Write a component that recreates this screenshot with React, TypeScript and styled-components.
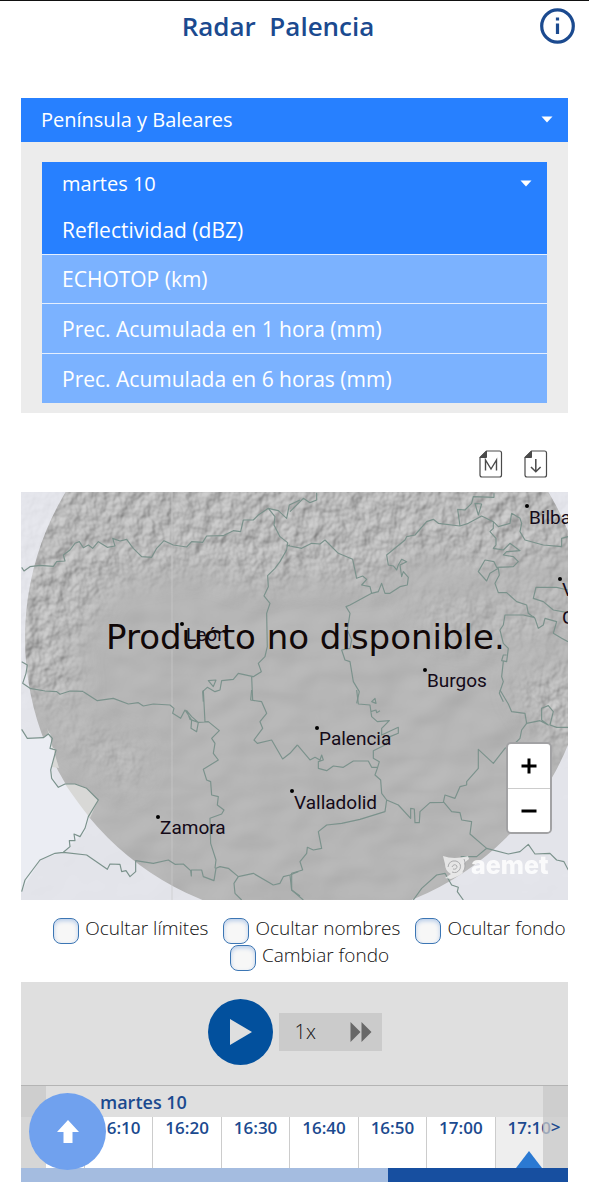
import React, { useState } from 'react';
import styled, { createGlobalStyle } from 'styled-components';

const sans = '"Open Sans", "Noto Sans", sans-serif';
const navy = '#1b4a8f';

const GlobalStyle = createGlobalStyle`
  * { box-sizing: border-box; }
  body { margin: 0; background: #fff; font-family: ${sans}; color: #111; }
  button, select, input { font-family: inherit; margin: 0; }
`;

const Page = styled.div`
  border-top: 1px solid #111;
`;

const Header = styled.header`
  display: grid;
  grid-template-columns: 1fr auto 1fr;
  align-items: center;
  height: 49px;
  padding: 0 14px 0 21px;
`;

const Title = styled.h1`
  grid-column: 2;
  margin: 0;
  padding-right: 40px;
  font-family: ${sans};
  font-size: 26px;
  line-height: 32px;
  font-weight: 600;
  color: ${navy};
  white-space: pre;
`;

const InfoButton = styled.button`
  justify-self: end;
  width: 35px;
  height: 36px;
  padding: 0;
  border: 0;
  background: none;
`;

const Main = styled.main`
  padding: 48px 21px 18px;
`;

const SelectWrap = styled.div`
  position: relative;
  height: 44px;
  background: #2780ff;
`;

const Select = styled.select`
  appearance: none;
  width: 100%;
  height: 44px;
  padding: 0 20px;
  border: 0;
  border-radius: 0;
  background: transparent;
  color: #fff;
  font-size: 20px;
  line-height: 28px;
`;

const Caret = styled.svg`
  position: absolute;
  right: 15px;
  top: 18px;
  width: 12px;
  height: 7px;
  pointer-events: none;
`;

const Panel = styled.section`
  padding: 20px 21px 10px;
  background: #ececec;
`;

const ProductList = styled.div`
  display: grid;
  gap: 1px;
  background: #e4efff;
`;

const Product = styled.button<{ $active?: boolean }>`
  height: 48px;
  padding: 0 20px;
  border: 0;
  text-align: left;
  font-size: 21px;
  line-height: 28px;
  color: #fff;
  background: ${p => (p.$active ? '#2780ff' : '#7bb2ff')};
  &:nth-child(n + 3) { height: 49px; }
`;

const Tools = styled.div`
  display: flex;
  justify-content: flex-end;
  gap: 21px;
  padding: 37px 20px 14px;
`;

const ToolButton = styled.button`
  width: 24px;
  height: 28px;
  padding: 0;
  border: 0;
  background: none;
`;

const MapFrame = styled.div`
  position: relative;
`;

const MapSvg = styled.svg`
  display: block;
  width: 100%;
  height: auto;
`;

const Zoom = styled.div`
  position: absolute;
  right: 16px;
  bottom: 66px;
  width: 46px;
  border: 2px solid #a2a2a4;
  border-radius: 5px;
  overflow: hidden;
`;

const ZoomButton = styled.button`
  display: grid;
  place-items: center;
  width: 100%;
  height: 44px;
  padding: 0;
  border: 0;
  background: #fff;
  & + & { border-top: 1px solid #ccc; }
`;

const Options = styled.div`
  display: flex;
  flex-wrap: wrap;
  justify-content: center;
  column-gap: 15px;
  padding: 16px 0 12px 30px;
`;

const Option = styled.label`
  display: flex;
  gap: 6px;
  height: 27px;
  font-size: 19px;
  line-height: 24px;
  font-weight: 300;
  white-space: nowrap;
`;

const Check = styled.input`
  appearance: none;
  flex: none;
  width: 26px;
  height: 26px;
  margin-top: 2px;
  border: 1px solid #3c76b4;
  border-radius: 8px;
  background: #f7f7f7;
  box-shadow: inset 0 2px 4px #b7cce9;
  &:checked { background: #2780ff; }
`;

const Player = styled.section`
  position: relative;
  background: #dfdfdf;
`;

const Controls = styled.div`
  display: flex;
  align-items: center;
  justify-content: center;
  gap: 6px;
  height: 104px;
  padding-bottom: 4px;
  border-bottom: 1px solid #b4b4b4;
`;

const PlayButton = styled.button`
  display: grid;
  place-items: center;
  width: 65px;
  height: 66px;
  padding: 0 0 0 2px;
  border: 0;
  border-radius: 50%;
  background: #02509d;
`;

const SpeedButton = styled.button`
  display: flex;
  align-items: center;
  justify-content: space-between;
  width: 103px;
  height: 38px;
  padding: 0 10px 0 16px;
  border: 0;
  background: #cbcbcb;
  font-size: 20px;
  font-weight: 300;
  color: #111;
`;

const Timeline = styled.div`
  position: relative;
  overflow: hidden;
`;

const Day = styled.div`
  height: 31px;
  padding-left: 79px;
  font-size: 18px;
  line-height: 32px;
  font-weight: 600;
  color: ${navy};
`;

const Times = styled.div`
  display: grid;
  grid-template-columns: 64px repeat(7, 1fr);
  height: 51px;
  padding-right: 4px;
  background: #eee;
`;

const Time = styled.button<{ $current?: boolean }>`
  display: flex;
  flex-direction: column;
  align-items: center;
  justify-content: space-between;
  padding: 0;
  border: 0;
  border-right: 1px solid ${p => (p.$current ? '#eee' : '#ccc')};
  background: ${p => (p.$current ? '#eee' : '#fff')};
  font-size: 17px;
  line-height: 22px;
  font-weight: 600;
  color: ${navy};
`;

const Marker = styled.svg`
  width: 26px;
  height: 17px;
`;

const Edge = styled.button<{ $side: 'left' | 'right' }>`
  position: absolute;
  top: 0;
  bottom: 0;
  ${p => p.$side}: 0;
  width: 25px;
  padding: 0;
  border: 0;
  background: rgba(200, 200, 200, 0.75);
  font-size: 17px;
  line-height: 22px;
  font-weight: 600;
  color: ${navy};
`;

const Progress = styled.div`
  display: grid;
  grid-template-columns: 367fr 180fr;
  height: 14px;
  background: #a4bce0;
  &::after { content: ''; grid-column: 2; background: #174fa0; }
`;

const TopLink = styled.a`
  position: absolute;
  left: 8px;
  bottom: 12px;
  display: grid;
  place-items: center;
  width: 77px;
  height: 77px;
  border-radius: 50%;
  background: #70a1ee;
`;

const regions = ['Península y Baleares', 'Canarias'];
const products = ['Reflectividad (dBZ)', 'ECHOTOP (km)', 'Prec. Acumulada en 1 hora (mm)', 'Prec. Acumulada en 6 horas (mm)'];
const options = ['Ocultar límites', 'Ocultar nombres', 'Ocultar fondo', 'Cambiar fondo'];
const times = ['16:10', '16:20', '16:30', '16:40', '16:50', '17:00', '17:10'];

const cities = [
  { name: 'León', x: 161, y: 132, lx: 165, ly: 149 },
  { name: 'Bilbao', x: 506, y: 14, lx: 508, ly: 32 },
  { name: 'Vitoria-', x: 539, y: 87, lx: 541, ly: 104 },
  { name: 'Gasteiz', x: -9, y: -9, lx: 541, ly: 132 },
  { name: 'Burgos', x: 404, y: 178, lx: 406, ly: 195 },
  { name: 'Palencia', x: 296, y: 236, lx: 298, ly: 253 },
  { name: 'Valladolid', x: 271, y: 299, lx: 273, ly: 317 },
  { name: 'Zamora', x: 137, y: 325, lx: 139, ly: 342 },
];

/* Province borders, one group per quarter of the map. */
const borders = [
  { dx: -1, dy: -2, d: 'M5 232L12 243 30 230 60 226 100 229 110 215 135 213 130 195 150 180 165 160 178 155 190 173 205 165 218 175 235 155 262 172 285 168 278 145 300 153 320 148 340 175 365 200 395 202 410 175 432 152 460 165 500 171 515 155 548 157 560 138 610 137 640 122 662 125 670 90 700 90 715 75 745 55 765 80 762 105 780 140 803 158 800 180 780 215 765 235 743 257 745 290 732 318 750 340 740 370 742 470 735 500 715 520 724 545 700 560 655 550 640 568 605 572 600 600 585 605 562 592 548 605 550 635M803 168L810 165M745 55L775 62 800 85 808 45 840 30M565 572L588 570 580 590ZM695 560L698 630M5 515L22 525 18 550 8 580 30 595 75 603 110 605 120 613 150 603 190 604' },
  { dx: 269, dy: -2, d: 'M-10 165L0 168 35 175 65 160 90 162 105 150 145 190 188 208 200 265 218 258 230 268 215 285 240 290 245 310 265 305 275 280 285 310 300 310 330 290 352 285 355 262 340 245 335 260 330 225 350 215 335 208 325 225 320 240 310 228 295 225 290 195 345 150 350 140 375 135 410 95 430 88 445 100 510 108 535 100 575 78 610 95 610 115 600 125 618 145 618 165 610 175 640 180 660 160 690 182 650 185 640 195 670 200 685 215 670 230 620 232 612 215 585 210 565 245 590 273 600 250 625 235 628 255 615 280 625 308 650 308 680 335 710 345 715 370 735 385 745 415 760 405 765 385 800 395 790 430 815 445 834 455M245 310L180 345 168 350 180 370 172 420 185 450 180 475 155 480 165 510 180 515 190 575 208 605 200 640M510 108L503 58 525 60 545 40 550 20 612 22 612 10M555 40L575 42 565 75ZM610 95L625 110 660 100 665 70 690 85 695 100 690 125 705 150 760 165 815 170 815 145 834 140M735 383L700 375 645 375 640 405 630 420 640 460 655 475 650 515 635 512 640 495 650 495M640 515L635 560 640 575 628 610 640 635M834 300L800 292 738 292 730 325 760 335 790 360 834 368M0 65L40 25 60 38 80 30 80 8' },
  { dx: -1, dy: 198, d: 'M190 5L232 32 280 25 325 42 355 38 370 48 400 42 450 45 462 55 458 70 482 85 495 60 515 90 513 115 530 125 535 97 515 80 500 62 510 88 535 97 565 95 598 122 575 145 585 160 580 190 595 210 550 238 560 270 572 275 575 315 595 320 592 345 612 360 605 372 570 385 572 460 588 510 585 535M550 0L555 95M5 118L22 145 70 143 85 132 97 145 90 175 108 180 92 240 95 265 115 292 135 282 165 282 200 295 235 330 205 380 195 415 180 440 162 432 165 452 148 452 150 470 130 487 105 490 60 510 15 570 5 605M130 487L200 495 262 538 270 522 300 523 305 545 318 542 330 560 347 545 347 512 400 520 445 510 465 523 490 522 512 542 514 558 514 540 545 540 550 560 582 572 588 535 600 530 625 535 655 560 700 550 760 585 780 580 790 560 810 555M655 560L642 580 645 610 665 630M835 545L810 555 815 600 840 618M695 0L692 30 725 35 740 70 720 95 728 115 702 150 712 160 755 150 788 207 810 190 832 165' },
  { dx: 269, dy: 198, d: 'M22 165L60 210 75 202 90 210 95 195 100 210 85 215 85 235 110 242 130 228 160 232 190 213 235 213 245 232 262 232M200 0L205 42 240 45 245 80 262 95 298 92 275 115 275 135 325 112 325 130 300 140 285 165 250 182 250 205 268 215 262 235 255 255 272 270 275 310 290 330 285 365 210 388 155 400 110 405 85 425 95 475 70 480 52 472 50 490 30 515 38 540 5 550 5 600 40 630M290 330L325 345 362 385 362 355 373 357 375 398 388 398 390 365 420 338 460 337 465 315 495 325 510 290 530 285 530 275 565 235 565 178 610 220 645 175 670 165 690 145 695 120 710 100M460 335L485 365 510 368 515 390 545 395 540 432 590 475 655 492 690 485 715 463 735 492 780 490 800 510 822 515 835 540M630 0L655 42 665 65 705 70 710 100 750 92 775 105 755 90 755 55 775 47 790 65 780 105 800 112 835 112M590 475L560 500 512 500M370 630L395 595 440 555 465 550 485 585 505 592 502 605 520 630M245 35L255 25 258 40ZM242 65L258 60 260 68 270 62' },
];

function RadarMap() {
  return (
    <MapSvg viewBox="0 0 547 408" role="img" aria-label="Mapa del radar de Palencia">
      <defs>
        <filter id="relief" x="0" y="0" width="100%" height="100%" colorInterpolationFilters="sRGB">
          <feTurbulence type="fractalNoise" baseFrequency="0.075 0.065" numOctaves="3" seed="8" />
          <feDiffuseLighting surfaceScale="2" diffuseConstant="1" lightingColor="#d6d6d6">
            <feDistantLight azimuth="225" elevation="60" />
          </feDiffuseLighting>
        </filter>
        <filter id="plain" x="0" y="0" width="100%" height="100%" colorInterpolationFilters="sRGB">
          <feTurbulence type="fractalNoise" baseFrequency="0.02 0.03" numOctaves="2" seed="3" />
          <feDiffuseLighting surfaceScale="4" diffuseConstant="1" lightingColor="#d2d2d2">
            <feDistantLight azimuth="225" elevation="60" />
          </feDiffuseLighting>
        </filter>
        <filter id="soft" x="-20%" y="-20%" width="140%" height="140%"><feGaussianBlur stdDeviation="14" /></filter>
        <mask id="mountains">
          <g filter="url(#soft)">
            <path d="M-40-40H590V55L470 75 400 60 340 95 300 80 240 95 180 75 90 90 50 160 60 205-40 210Z" fill="#ddd" />
            <path d="M490 190L590 160V300L530 250Z" fill="#ddd" />
            <path d="M380 100L470 100 590 70V150H420Z" fill="#777" />
            <path d="M20 220L130 260 110 300 40 250Z" fill="#777" />
          </g>
        </mask>
      </defs>
      <rect width="547" height="408" fill="#b6b6b6" />
      <rect width="547" height="408" filter="url(#plain)" opacity="0.25" />
      <g mask="url(#mountains)"><rect width="547" height="408" filter="url(#relief)" /></g>
      <path d="M0 0H547V408H0ZM4 146A282 282 0 1 0 568 146 282 282 0 1 0 4 146Z" fillRule="evenodd" fill="#ebecf3" opacity="0.85" />
      <path d="M0 238L7 246 23 245 29 241 31 255 35 258 30 280 37 295 44 292 63 304 68 326 64 340 42 360 19 368 0 400Z" fill="#ebedf3" />
      <path d="M29 243L31 258 35 258 31 275 38 276 26 236ZM44 292L54 292 65 296 77 308 69 326Q57 311 44 292Z" fill="#d8d8d6" />
      <path d="M151 0V408" stroke="#c9c9c9" strokeWidth="1" opacity="0.7" />
      {borders.map((b, i) => (
        <path key={i} d={b.d} transform={`translate(${b.dx} ${b.dy}) scale(0.3333)`} fill="none" stroke="#7b928c" strokeWidth="3.5" strokeLinejoin="round" />
      ))}
      <g fill="#140a18" fontFamily="Roboto, sans-serif" fontSize="19">
        {cities.map(c => (
          <g key={c.name}>
            <circle cx={c.x} cy={c.y} r="2" fill="#000" />
            <text x={c.lx} y={c.ly}>{c.name}</text>
          </g>
        ))}
      </g>
      <text x="85" y="157" fontFamily='"DejaVu Sans", sans-serif' fontSize="34" fill="#110808">Producto no disponible.</text>
      <g fill="none" stroke="#fff" opacity="0.9">
        <path d="M422 364Q433 368 447 364L448 367 443 371Q446 380 437 384L430 387 424 386 430 382Q424 379 424 372Z" fill="#fff" stroke="none" opacity="0.75" />
        <path d="M427 375Q428 368 435 369 441 371 439 377 436 382 431 380" stroke="#a9aaac" strokeWidth="1" />
        <path d="M431 375Q433 371 436 374 436 378 432 377M443 367Q446 374 442 380" stroke="#a9aaac" strokeWidth="1" />
      </g>
      <text x="450" y="382" fontFamily='Inter, "Open Sans", sans-serif' fontWeight="800" fontSize="25" fill="#fff" opacity="0.85">aemet</text>
    </MapSvg>
  );
}

function SelectField({ label, items }: { label: string; items: string[] }) {
  return (
    <SelectWrap>
      <Select aria-label={label}>
        {items.map(i => <option key={i}>{i}</option>)}
      </Select>
      <Caret viewBox="0 0 12 7" aria-hidden="true"><path d="M0.5 0.5H11.5L6 6.5Z" fill="#fff" /></Caret>
    </SelectWrap>
  );
}

export default function App() {
  const [product, setProduct] = useState(0);
  return (
    <Page id="top">
      <GlobalStyle />
      <Header>
        <Title>{'Radar  Palencia'}</Title>
        <InfoButton aria-label="Información">
          <svg width="35" height="36" viewBox="0 0 35 36" fill="none" stroke={navy}>
            <ellipse cx="17.5" cy="18" rx="15.8" ry="16.2" strokeWidth="3.2" />
            <path d="M17.5 15.5V26M17.5 9.5V12.5" strokeWidth="3.2" />
          </svg>
        </InfoButton>
      </Header>
      <Main>
        <SelectField label="Región" items={regions} />
        <Panel>
          <SelectField label="Día" items={['martes 10']} />
          <ProductList>
            {products.map((p, i) => (
              <Product key={p} $active={i === product} onClick={() => setProduct(i)}>{p}</Product>
            ))}
          </ProductList>
        </Panel>
        <Tools>
          <ToolButton aria-label="Mapa">
            <svg width="24" height="28" viewBox="0 0 24 28" fill="none" stroke="#4a4a4a">
              <path d="M7.5 1H20.5Q22.5 1 22.5 3V25Q22.5 27 20.5 27H3Q1 27 1 25V7.5Z" strokeWidth="1.2" />
              <path d="M7.5 1V7.5H1Z" fill="#4a4a4a" />
              <path d="M6.5 20.5V10L12 19 17.5 10V20.5" strokeWidth="1.4" />
            </svg>
          </ToolButton>
          <ToolButton aria-label="Descargar">
            <svg width="24" height="28" viewBox="0 0 24 28" fill="none" stroke="#4a4a4a">
              <path d="M7.5 1H20.5Q22.5 1 22.5 3V25Q22.5 27 20.5 27H3Q1 27 1 25V7.5Z" strokeWidth="1.2" />
              <path d="M7.5 1V7.5H1Z" fill="#4a4a4a" />
              <path d="M11.8 9V21.5M7 17L11.8 21.8 16.6 17" strokeWidth="1.5" />
            </svg>
          </ToolButton>
        </Tools>
        <MapFrame>
          <RadarMap />
          <Zoom>
            <ZoomButton aria-label="Acercar">
              <svg width="16" height="16" viewBox="0 0 16 16"><path d="M8 0.5V15.5M0.5 8H15.5" stroke="#000" strokeWidth="3" /></svg>
            </ZoomButton>
            <ZoomButton aria-label="Alejar">
              <svg width="16" height="16" viewBox="0 0 16 16"><path d="M0.5 8H15.5" stroke="#000" strokeWidth="3" /></svg>
            </ZoomButton>
          </Zoom>
        </MapFrame>
        <Options>
          {options.map(o => (
            <Option key={o}><Check type="checkbox" />{o}</Option>
          ))}
        </Options>
        <Player>
          <Controls>
            <PlayButton aria-label="Reproducir">
              <svg width="22" height="26" viewBox="0 0 22 26"><path d="M0 0L22 13 0 26Z" fill="#dfdfdf" /></svg>
            </PlayButton>
            <SpeedButton>
              1x
              <svg width="22" height="20" viewBox="0 0 22 20"><path d="M0.5 0L10.5 10 0.5 20ZM11.5 0L21.5 10 11.5 20Z" fill="#686868" /></svg>
            </SpeedButton>
          </Controls>
          <Timeline>
            <Day>martes 10</Day>
            <Times>
              <Time aria-label="16:00" />
              {times.map((t, i) => (
                <Time key={t} $current={i === 6}>
                  {t}
                  {i === 6 && <Marker viewBox="0 0 26 17" aria-hidden="true"><path d="M13 0L26 17H0Z" fill="#2b79d2" /></Marker>}
                </Time>
              ))}
            </Times>
            <Edge $side="left" aria-label="Anterior" />
            <Edge $side="right" aria-label="Siguiente">&gt;</Edge>
          </Timeline>
          <Progress />
          <TopLink href="#top" aria-label="Subir">
            <svg width="22" height="23" viewBox="0 0 22 23"><path d="M11 0L22 12H15.5V23H6.5V12H0Z" fill="#fff" /></svg>
          </TopLink>
        </Player>
      </Main>
    </Page>
  );
}
